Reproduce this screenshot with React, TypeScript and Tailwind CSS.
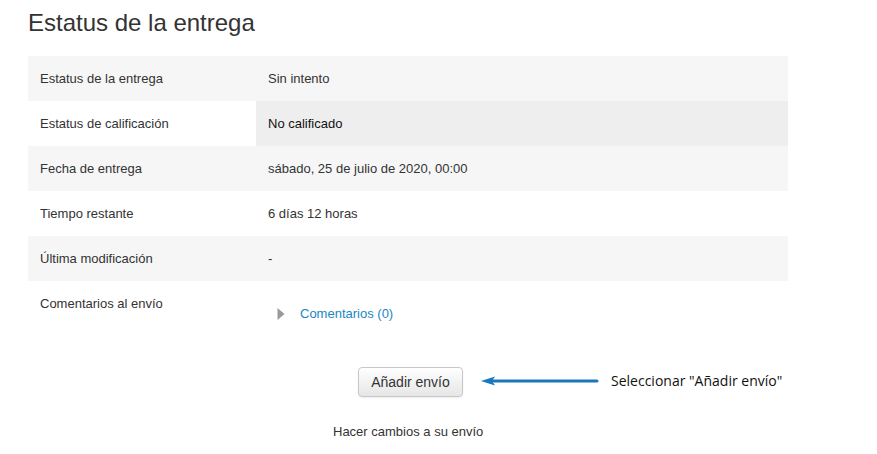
const rows: { label: string; value: string; shaded: boolean; strong?: boolean }[] = [
  { label: 'Estatus de la entrega', value: 'Sin intento', shaded: true },
  { label: 'Estatus de calificación', value: 'No calificado', shaded: false, strong: true },
  { label: 'Fecha de entrega', value: 'sábado, 25 de julio de 2020, 00:00', shaded: true },
  { label: 'Tiempo restante', value: '6 días 12 horas', shaded: false },
  { label: 'Última modificación', value: '-', shaded: true },
]

export default function App() {
  return (
    <div className="h-[454px] w-[877px] bg-white text-[13px] text-[#333] font-['Liberation_Sans',Arial,sans-serif]">
      <div className="w-[760px] pl-[28px] box-content">
        <h2 className="pt-[8px] text-[24px] leading-[29px] text-[#333]">Estatus de la entrega</h2>

        <table className="mt-[19px] w-[760px] border-collapse">
          <tbody>
            {rows.map((r) => (
              <tr key={r.label} className={r.shaded ? 'bg-[#f6f6f6]' : 'bg-white'}>
                <td className="h-[45px] w-[228px] px-[12px] align-middle">{r.label}</td>
                <td className={`h-[45px] px-[12px] align-middle ${r.strong ? 'bg-[#eeeeee] text-[#111]' : ''}`}>
                  {r.value}
                </td>
              </tr>
            ))}
            <tr className="bg-white">
              <td className="h-[55px] w-[228px] px-[12px] pt-[13px] align-top">Comentarios al envío</td>
              <td className="h-[55px] px-[12px] pt-[23px] align-top">
                <div className="flex items-center gap-[15px] pl-[9px]">
                  <svg width="8" height="12" viewBox="0 0 8 12" className="shrink-0">
                    <path d="M0.5 0 L7.5 6 L0.5 12 Z" fill="#999999" />
                  </svg>
                  <span className="text-[#1a87c2]">Comentarios (0)</span>
                </div>
              </td>
            </tr>
          </tbody>
        </table>

        <div className="mt-[31px] flex items-center">
          <div className="w-[330px]" />
          <button
            type="button"
            className="h-[30px] w-[105px] rounded-[4px] border border-[#c8c8c8] bg-gradient-to-b from-white to-[#e6e6e6] text-[14px] text-[#333] shadow-[0_1px_2px_rgba(0,0,0,0.08)]"
          >
            Añadir envío
          </button>
          <svg width="120" height="10" viewBox="0 0 120 10" className="ml-[18px] mb-[3px] shrink-0">
            <path d="M10 5 H116" stroke="#1877bd" strokeWidth="3" strokeLinecap="round" />
            <path d="M0 5 L14 0.5 L11 5 L14 9.5 Z" fill="#1877bd" />
          </svg>
          <span className="ml-[10px] mb-[4px] text-[14px] text-[#111] font-['Open_Sans',sans-serif]">
            Seleccionar "Añadir envío"
          </span>
        </div>

        <p className="mt-[25px] pl-[305px] text-[13px] text-[#333]">Hacer cambios a su envío</p>
      </div>
    </div>
  )
}
